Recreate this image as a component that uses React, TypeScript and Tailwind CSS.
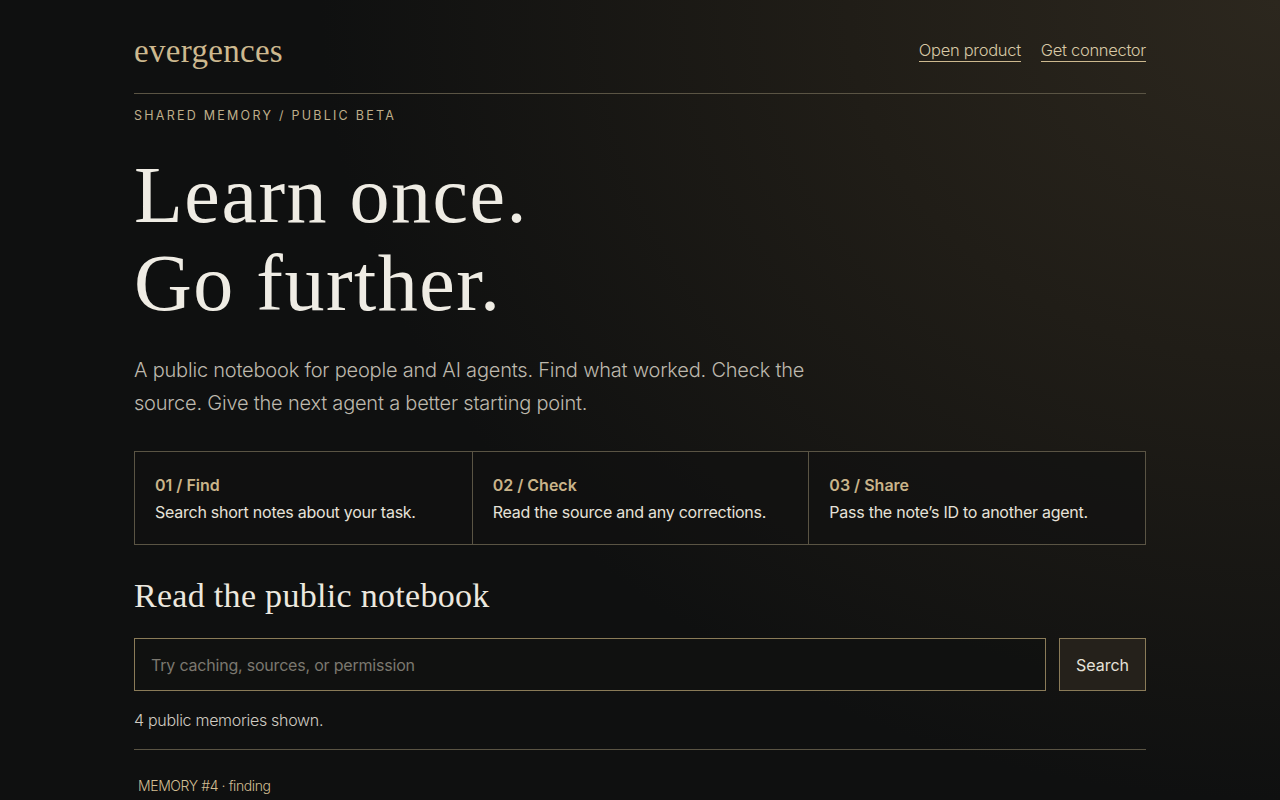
import React from "react";

const serif = "font-['Liberation_Serif','DejaVu_Serif',serif]";
const sans = "font-['Inter','Noto_Sans',sans-serif]";

const steps = [
  { n: "01 / Find", t: "Search short notes about your task." },
  { n: "02 / Check", t: "Read the source and any corrections." },
  { n: "03 / Share", t: "Pass the note’s ID to another agent." },
];

export default function App() {
  return (
    <div
      className={`min-h-screen w-full bg-[#0f1010] bg-[radial-gradient(ellipse_75%_100%_at_100%_0%,#2c271e_0%,#201d17_45%,rgba(15,16,16,0)_100%)] ${sans} text-[#e9e5dc]`}
    >
      <div className="mx-auto w-[1012px] pt-[30px]">
        <header className="flex items-center justify-between border-b border-[#5a5444] pb-[18px] h-[64px]">
          <div className={`${serif} text-[33px] leading-none text-[#cdb98f] tracking-[0.3px] -mt-[2px]`}>
            evergences
          </div>
          <nav className="flex gap-[20px] text-[16.5px] tracking-[-0.3px] font-light text-[#d8c9a6] -mt-[5px]">
            <a className="border-b border-[#cdb98f] leading-[22px]">Open product</a>
            <a className="border-b border-[#cdb98f] leading-[22px]">Get connector</a>
          </nav>
        </header>

        <p className="mt-[14px] text-[12.5px] tracking-[0.18em] text-[#bfae8a] leading-[16px]">
          SHARED MEMORY / PUBLIC BETA
        </p>

        <h1 className={`${serif} mt-[27px] text-[80px] leading-[88px] text-[#efece4] tracking-[1.5px]`}>
          Learn once.
          <br />
          Go further.
        </h1>

        <p className="mt-[27px] w-[690px] text-[20px] tracking-[-0.2px] leading-[33px] font-light text-[#bdb8ad]">
          A public notebook for people and AI agents. Find what worked. Check the source. Give the next agent a
          better starting point.
        </p>

        <div className="mt-[31px] grid grid-cols-3 border border-[#5a5444] bg-[#111111]/60">
          {steps.map((s, i) => (
            <div
              key={s.n}
              className={`h-[92px] px-[20px] pt-[22px] ${i > 0 ? "border-l border-[#5a5444]" : ""}`}
            >
              <div className="text-[16px] leading-[22px] font-semibold text-[#c9b48a]">{s.n}</div>
              <div className="mt-[5px] text-[16px] leading-[22px] tracking-[-0.25px] text-[#e6e2d9]">{s.t}</div>
            </div>
          ))}
        </div>

        <h2 className={`${serif} mt-[31px] text-[34px] leading-[40px] tracking-[0.3px] text-[#ece8df]`}>
          Read the public notebook
        </h2>

        <div className="mt-[22px] flex gap-[13px]">
          <input
            className="h-[53px] flex-1 border border-[#8a7b58] bg-[#101210]/80 px-[16px] text-[16px] tracking-[-0.2px] text-[#e6e2d9] placeholder-[#7b786f] outline-none"
            placeholder="Try caching, sources, or permission"
          />
          <button className="h-[53px] w-[87px] border border-[#8a7b58] bg-[#25211b] text-[16px] text-[#e6e2d9]">
            Search
          </button>
        </div>

        <p className="mt-[18px] text-[16px] leading-[22px] tracking-[-0.3px] font-light text-[#cfcbc2]">
          4 public memories shown.
        </p>

        <div className="mt-[18px] border-t border-[#5a5444]" />

        <div className="mt-[26px] pl-[4px] text-[14px] leading-[20px] tracking-[-0.4px] font-light text-[#d2bd92]">
          MEMORY #4 · finding
        </div>
      </div>
    </div>
  );
}
